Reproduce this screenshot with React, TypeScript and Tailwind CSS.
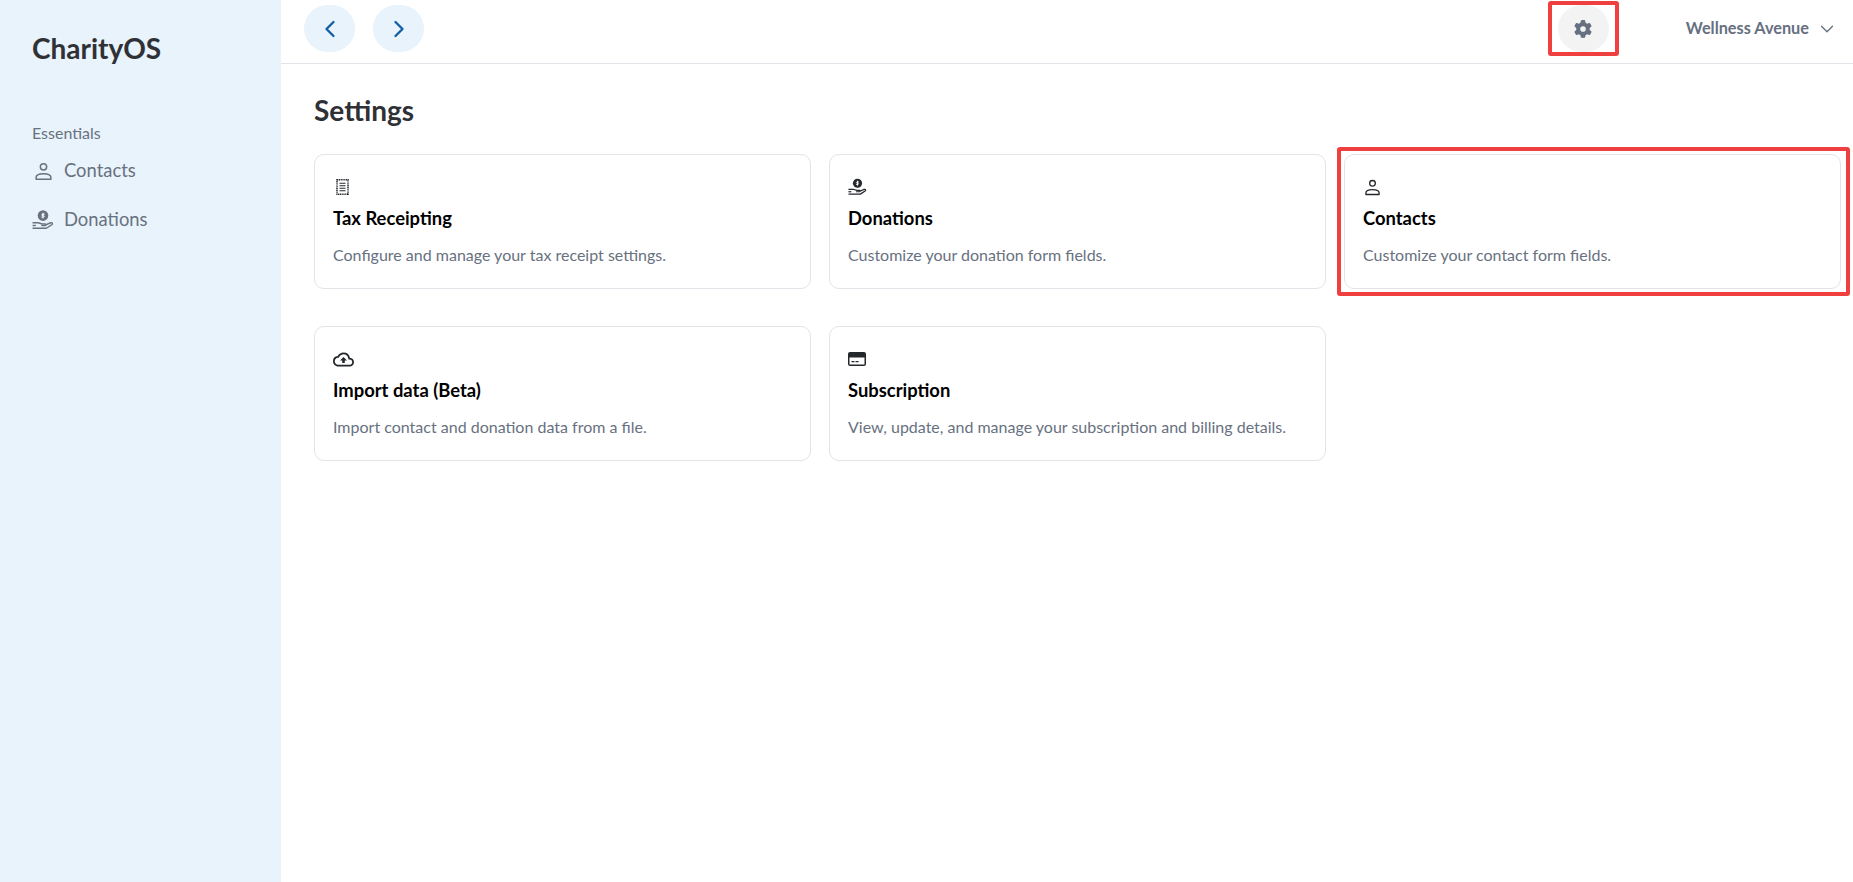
import { ChevronDown, ChevronLeft, ChevronRight } from "lucide-react";
import { FaGear } from "react-icons/fa6";
import { MdOutlineCloudUpload } from "react-icons/md";

function PersonIcon({ className }: { className: string }) {
  return (
    <svg viewBox="0 0 18 18" fill="none" stroke="currentColor" strokeWidth="1.4" className={className}>
      <circle cx="9" cy="4.6" r="3" />
      <path d="M2 16.400v-1.600c0-2.200 3-3.600 7-3.600s7 1.400 7 3.600v1.600z" strokeLinejoin="round" />
    </svg>
  );
}

function DonationIcon({ className }: { className: string }) {
  return (
    <svg viewBox="0 0 20 18" fill="none" className={className}>
      <circle cx="10" cy="5" r="4.800" fill="currentColor" />
      <path d="M10 2.400v5.200M11.500 3.700H9.300a.8.8 0 0 0 0 1.300h1.400a.8.8 0 0 1 0 1.300H8.500" stroke="white" strokeWidth="0.9" />
      <path d="M.5 11.500h5c1.500 0 2 1 4 1H12c1 0 1 1.500 0 1.500H8.500M12.500 13.500l4.500-2c1.500-.5 2.200 1 1 1.800l-5 3.200H.5" stroke="currentColor" strokeWidth="1.300" strokeLinejoin="round" />
      <path d="M.5 14h3" stroke="currentColor" strokeWidth="1.300" />
    </svg>
  );
}

function ReceiptIcon({ className }: { className: string }) {
  return (
    <svg viewBox="0 0 13 16" fill="none" stroke="currentColor" className={className}>
      <path d="M1 .8h11v14.400H1z" strokeWidth="1.500" strokeDasharray="1.200 0.600" />
      <path d="M3.500 4.200h6M3.500 6.700h6M3.500 9.200h6M3.500 11.700h6" strokeWidth="1.100" />
    </svg>
  );
}

function CardIcon({ className }: { className: string }) {
  return (
    <svg viewBox="0 0 18 14" className={className}>
      <path fill="currentColor" fillRule="evenodd" d="M2 0h14a2 2 0 0 1 2 2v10a2 2 0 0 1-2 2H2a2 2 0 0 1-2-2V2a2 2 0 0 1 2-2zM1.500 5.500V12a.5.5 0 0 0 .5.5h14a.5.5 0 0 0 .5-.5V5.500z" />
      <path fill="currentColor" d="M3.500 9h3v1.300h-3zM7.500 9h3v1.300h-3z" />
    </svg>
  );
}

const cards = [
  { title: "Tax Receipting", text: "Configure and manage your tax receipt settings.", icon: <ReceiptIcon className="ml-[3px] h-[16px] w-[13px]" /> },
  { title: "Donations", text: "Customize your donation form fields.", icon: <DonationIcon className="h-[18px] w-[19px]" /> },
  { title: "Contacts", text: "Customize your contact form fields.", icon: <PersonIcon className="ml-[1px] h-[17px] w-[17px]" /> },
  { title: "Import data (Beta)", text: "Import contact and donation data from a file.", icon: <MdOutlineCloudUpload className="h-[21px] w-[21px]" /> },
  { title: "Subscription", text: "View, update, and manage your subscription and billing details.", icon: <CardIcon className="h-[14px] w-[18px]" /> },
];

export default function App() {
  return (
    <div className="relative flex h-[882px] bg-white font-['Lato','Noto_Sans',sans-serif]">
      {/* Sidebar */}
      <aside className="w-[281px] shrink-0 bg-[#e9f3fb] pl-8">
        <div className="pt-[28px] text-[28px] leading-[40px] font-bold text-[#2f3136]">CharityOS</div>
        <div className="mt-[55px] text-[16px] leading-[20px] text-[#68717f]">Essentials</div>
        <div className="mt-[11px] flex h-[34px] items-center gap-[11px] text-[18.400px] text-[#68717f]">
          <PersonIcon className="ml-[2px] h-[19px] w-[19px]" />
          <span>Contacts</span>
        </div>
        <div className="mt-[15px] flex h-[34px] items-center gap-[10px] text-[18.400px] text-[#68717f]">
          <DonationIcon className="h-[20px] w-[22px]" />
          <span>Donations</span>
        </div>
      </aside>

      <div className="min-w-0 flex-1">
        {/* Top bar */}
        <header className="flex h-[64px] items-center border-b border-[#e2e4ea] pb-[6px] pr-[15px] pl-[23px]">
          <button className="flex h-[47px] w-[51px] items-center justify-center rounded-full bg-[#e9f3fb] text-[#125fa8]">
            <ChevronLeft className="h-[28px] w-[28px]" strokeWidth={2} />
          </button>
          <button className="ml-[18px] flex h-[47px] w-[51px] items-center justify-center rounded-full bg-[#e9f3fb] text-[#125fa8]">
            <ChevronRight className="h-[28px] w-[28px]" strokeWidth={2} />
          </button>
          <button className="ml-auto flex h-[47px] w-[51px] items-center justify-center rounded-full bg-[#f3f3f3] text-[#667080]">
            <FaGear className="h-[18px] w-[18px]" />
          </button>
          <div className="ml-[77px] flex items-center gap-[7px] text-[16.300px] font-bold text-[#667080]">
            <span>Wellness Avenue</span>
            <ChevronDown className="h-[22px] w-[22px]" strokeWidth={1.500} />
          </div>
        </header>

        <main className="pl-[33px] pr-[12px]">
          <h1 className="pt-[27px] text-[28px] leading-[38px] font-bold text-[#2f3136]">Settings</h1>
          <div className="mt-[25px] grid grid-cols-3 gap-x-[18px] gap-y-[37px]">
            {cards.map((c) => (
              <div key={c.title} className="h-[135px] rounded-[10px] border border-[#e2e4ea] px-[18px] pt-[21px]">
                <div className="flex h-[22px] items-center text-[#24272c]">{c.icon}</div>
                <div className="mt-[7px] text-[18.400px] leading-[26px] font-bold text-black">{c.title}</div>
                <div className="mt-[12px] text-[16px] leading-[24px] text-[#68717f]">{c.text}</div>
              </div>
            ))}
          </div>
        </main>
      </div>

      {/* Red annotation boxes over the screenshot */}
      <div className="absolute top-[1px] left-[1548px] h-[55px] w-[71px] rounded-[3px] border-[4px] border-[#ef3f3f]" />
      <div className="absolute top-[147px] left-[1337px] h-[149px] w-[513px] rounded-[3px] border-[4px] border-[#ef3f3f]" />
    </div>
  );
}
